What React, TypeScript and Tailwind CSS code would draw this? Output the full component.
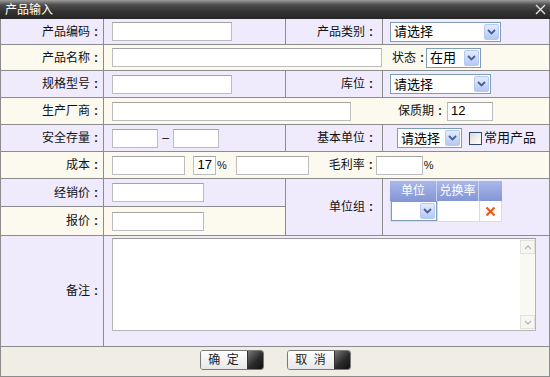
import React from 'react';

// row backgrounds
const LAV = 'bg-[#efebfd]';
const CREAM = 'bg-[#fcf9ef]';

type BoxProps = { className?: string; value?: string };

const Input: React.FC<BoxProps> = ({ className = '', value }) => (
  <input
    readOnly
    value={value ?? ''}
    className={`h-[19px] border border-[#bdbdbd] border-t-[#a3a3a3] bg-white px-[3px] text-[13px] text-black outline-none ${className}`}
  />
);

const Select: React.FC<{ className?: string; text?: string }> = ({ className = '', text }) => (
  <div className={`flex h-[20px] items-center border border-[#7f9db9] bg-white ${className}`}>
    <span className="flex-1 truncate pl-[3px] text-[13px] leading-none text-black">{text}</span>
    <span className="mr-px flex h-[16px] w-[15px] items-center justify-center rounded-[2px] border border-[#b6c9f3] bg-[linear-gradient(#e3ebff,#b4c8f6)]">
      <svg width="9" height="6" viewBox="0 0 9 6">
        <path d="M1 1l3.5 3.5L8 1" stroke="#4a5f8a" strokeWidth="1.8" fill="none" />
      </svg>
    </span>
  </div>
);

// label text with a spaced colon, like the old form
const Txt: React.FC<{ t: string; className?: string }> = ({ t, className = '' }) => (
  <span className={`flex items-center whitespace-nowrap ${className}`}>
    {t}
    <span className="ml-[4px] font-bold">:</span>
  </span>
);

const Label: React.FC<{ t: string; className?: string }> = ({ t, className = '' }) => (
  <div className={`flex shrink-0 items-center justify-end border-r border-[#8c8c8c] pr-[5px] ${className}`}>
    <Txt t={t} />
  </div>
);

const Btn: React.FC<{ text: string }> = ({ text }) => (
  <div className="flex h-[20px] w-[64px] overflow-hidden rounded-[3px] border border-[#7a7a7a]">
    <div className="flex flex-1 items-center justify-center whitespace-pre bg-[linear-gradient(#ffffff,#e6e6e6)] text-[12px] text-[#222]">
      {text}
    </div>
    <div className="w-[16px] border-l border-[#333] bg-[linear-gradient(135deg,#777,#2a2a2a_55%,#0e0e0e)]" />
  </div>
);

export default function App() {
  return (
    <div className="h-[377px] w-[550px] overflow-hidden bg-white font-['Liberation_Sans','Noto_Sans_CJK_SC',sans-serif] text-[12px] text-[#111]">
      {/* Title bar */}
      <div className="flex h-[19px] items-center justify-between bg-[linear-gradient(#9c9c9c,#4e4e4e_25%,#333_60%,#262626)] pl-[5px] pr-[4px]">
        <span className="text-[12px] leading-none text-white">产品输入</span>
        <svg width="11" height="11" viewBox="0 0 11 11">
          <path d="M1 1l9 9M10 1l-9 9" stroke="#e2e2e2" strokeWidth="1.4" />
        </svg>
      </div>

      <div className="flex h-[358px] flex-col border-x border-[#8c8c8c]">
        {/* 产品编码 / 产品类别 */}
        <div className={`flex h-[26px] shrink-0 border-b border-[#8c8c8c] ${LAV}`}>
          <Label className="w-[103px]" t="产品编码" />
          <div className="flex w-[182px] items-center border-r border-[#8c8c8c] pl-[8px]">
            <Input className="w-[120px]" />
          </div>
          <Label className="w-[97px] pr-[9px]" t="产品类别" />
          <div className="flex flex-1 items-center pl-[7px]">
            <Select className="w-[111px]" text="请选择" />
          </div>
        </div>

        {/* 产品名称 / 状态 */}
        <div className={`flex h-[26px] shrink-0 border-b border-[#8c8c8c] ${CREAM}`}>
          <Label className="w-[103px]" t="产品名称" />
          <div className="flex flex-1 items-center pl-[8px]">
            <Input className="w-[270px]" />
            <Txt className="ml-[10px]" t="状态" />
            <Select className="ml-[2px] w-[55px]" text="在用" />
          </div>
        </div>

        {/* 规格型号 / 库位 */}
        <div className={`flex h-[27px] shrink-0 border-b border-[#8c8c8c] ${LAV}`}>
          <Label className="w-[103px]" t="规格型号" />
          <div className="flex w-[182px] items-center border-r border-[#8c8c8c] pl-[8px]">
            <Input className="w-[120px]" />
          </div>
          <Label className="w-[97px] pr-[9px]" t="库位" />
          <div className="flex flex-1 items-center pl-[7px]">
            <Select className="w-[101px]" text="请选择" />
          </div>
        </div>

        {/* 生产厂商 / 保质期 */}
        <div className={`flex h-[27px] shrink-0 border-b border-[#8c8c8c] ${CREAM}`}>
          <Label className="w-[103px]" t="生产厂商" />
          <div className="flex flex-1 items-center pl-[8px]">
            <Input className="w-[239px]" />
            <Txt className="ml-[47px]" t="保质期" />
            <Input className="ml-[5px] w-[46px]" value="12" />
          </div>
        </div>

        {/* 安全存量 / 基本单位 */}
        <div className={`flex h-[27px] shrink-0 border-b border-[#8c8c8c] ${LAV}`}>
          <Label className="w-[103px]" t="安全存量" />
          <div className="flex w-[182px] items-center border-r border-[#8c8c8c] pl-[8px]">
            <Input className="w-[46px]" />
            <span className="w-[15px] text-center">–</span>
            <Input className="w-[46px]" />
          </div>
          <Label className="w-[97px] pr-[9px]" t="基本单位" />
          <div className="flex flex-1 items-center pl-[14px]">
            <Select className="w-[65px]" text="请选择" />
            <span className="ml-[7px] h-[13px] w-[13px] border border-[#2c4a78] bg-[linear-gradient(135deg,#dcdcd6,#fff)]" />
            <span className="ml-[2px] text-[13px]">常用产品</span>
          </div>
        </div>

        {/* 成本 / 毛利率 */}
        <div className={`flex h-[27px] shrink-0 border-b border-[#8c8c8c] ${CREAM}`}>
          <Label className="w-[103px]" t="成本" />
          <div className="flex flex-1 items-center pl-[8px]">
            <Input className="w-[73px]" />
            <Input className="ml-[8px] w-[23px] px-[1px] text-right" value="17" />
            <span className="ml-[1px] text-[11px]">%</span>
            <Input className="ml-[9px] w-[73px]" />
            <Txt className="ml-[20px]" t="毛利率" />
            <Input className="ml-[3px] w-[47px]" />
            <span className="ml-[1px] text-[11px]">%</span>
          </div>
        </div>

        {/* 经销价 / 报价 / 单位组 */}
        <div className="flex h-[57px] shrink-0 border-b border-[#8c8c8c]">
          <div className="flex w-[285px] shrink-0 flex-col">
            <div className={`flex h-[28px] border-b border-[#8c8c8c] ${LAV}`}>
              <Label className="w-[103px]" t="经销价" />
              <div className="flex flex-1 items-center border-r border-[#8c8c8c] pl-[8px]">
                <Input className="w-[92px]" />
              </div>
            </div>
            <div className={`flex flex-1 ${CREAM}`}>
              <Label className="w-[103px]" t="报价" />
              <div className="flex flex-1 items-center border-r border-[#8c8c8c] pl-[8px]">
                <Input className="w-[92px]" />
              </div>
            </div>
          </div>
          <Label className={`w-[97px] pr-[9px] ${LAV}`} t="单位组" />
          <div className={`flex-1 pl-[7px] pt-[2px] ${LAV}`}>
            <div className="w-[112px]">
              <div className="flex h-[20px] bg-[linear-gradient(#a9b8ea,#8496d6)] text-[12px] text-white">
                <div className="flex w-[47px] items-center justify-center border-r border-[#c9d2f0]">单位</div>
                <div className="flex w-[42px] items-center justify-center border-r border-[#c9d2f0]">兑换率</div>
                <div className="flex-1" />
              </div>
              <div className="flex h-[21px] border-x border-b border-[#d4daf0] bg-white">
                <div className="w-[47px] border-r border-[#d4daf0]">
                  <Select className="h-full w-full" />
                </div>
                <div className="w-[42px] border-r border-[#d4daf0]" />
                <div className="flex flex-1 items-center justify-center">
                  <svg width="11" height="11" viewBox="0 0 11 11">
                    <path d="M1.5 1.5l8 8M9.5 1.5l-8 8" stroke="#ea5a1c" strokeWidth="2.2" />
                  </svg>
                </div>
              </div>
            </div>
          </div>
        </div>

        {/* 备注 */}
        <div className={`flex h-[111px] shrink-0 border-b border-[#8c8c8c] ${LAV}`}>
          <Label className="w-[103px]" t="备注" />
          <div className="flex-1 pl-[8px] pt-[2px]">
            <div className="flex h-[93px] w-[424px] border border-[#b5b5b5] border-t-[#9a9a9a] bg-white">
              <div className="flex-1" />
              <div className="flex w-[15px] flex-col justify-between bg-[#f9f8f3] py-px">
                <div className="flex h-[14px] items-center justify-center border border-[#e2e2dc] bg-[#f6f6f2]">
                  <svg width="8" height="5" viewBox="0 0 8 5">
                    <path d="M1 4l3-3 3 3" stroke="#b9b9b4" strokeWidth="1.3" fill="none" />
                  </svg>
                </div>
                <div className="flex h-[14px] items-center justify-center border border-[#e2e2dc] bg-[#f6f6f2]">
                  <svg width="8" height="5" viewBox="0 0 8 5">
                    <path d="M1 1l3 3 3-3" stroke="#b9b9b4" strokeWidth="1.3" fill="none" />
                  </svg>
                </div>
              </div>
            </div>
          </div>
        </div>

        {/* Footer buttons */}
        <div className="flex flex-1 items-start justify-center gap-[23px] border-b border-[#8c8c8c] bg-[#efede4] pt-[3px]">
          <Btn text="确  定" />
          <Btn text="取  消" />
        </div>
      </div>
    </div>
  );
}
